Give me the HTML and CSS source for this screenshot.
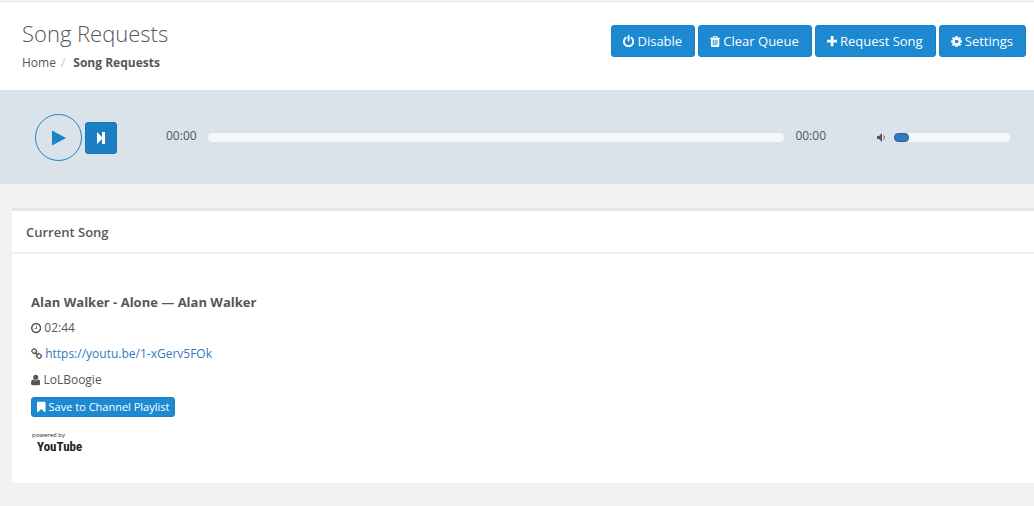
FILE: index.html
```html
<!DOCTYPE html>
<html lang="en">
<head>
    <meta charset="UTF-8">
    <meta name="viewport" content="width=device-width, initial-scale=1.0">
    <title>Song Requests</title>
    <link rel="stylesheet" href="styles.css">
</head>
<body>
    <header class="page-heading">
        <div class="heading-text">
            <h1>Song Requests</h1>
            <nav aria-label="Breadcrumb">
                <ol class="breadcrumb">
                    <li><a href="#">Home</a></li>
                    <li class="active"><strong>Song Requests</strong></li>
                </ol>
            </nav>
        </div>
        <div class="title-action">
            <button type="button" class="btn"><svg class="icon" viewBox="128 0 1536 1792" aria-hidden="true"><path d="M1664 896q0 156-61 298t-164 245-245 164-298 61-298-61-245-164-164-245-61-298q0-182 80.5-343t226.5-270q43-32 95.5-25t83.5 50q32 42 24.5 94.5t-49.5 84.5q-98 74-151.5 181t-53.5 228q0 104 40.5 198.5t109.5 163.5 163.5 109.5 198.5 40.5 198.5-40.5 163.5-109.5 109.5-163.5 40.5-198.5q0-121-53.5-228t-151.5-181q-42-32-49.5-84.5t24.5-94.5q31-43 84-50t95 25q146 109 226.5 270t80.5 343zm-640-768v640q0 52-38 90t-90 38-90-38-38-90v-640q0-52 38-90t90-38 90 38 38 90z"/></svg>Disable</button>
            <button type="button" class="btn"><svg class="icon" viewBox="192 0 1408 1792" aria-hidden="true"><path d="M704 1376v-704q0-14-9-23t-23-9h-64q-14 0-23 9t-9 23v704q0 14 9 23t23 9h64q14 0 23-9t9-23zm256 0v-704q0-14-9-23t-23-9h-64q-14 0-23 9t-9 23v704q0 14 9 23t23 9h64q14 0 23-9t9-23zm256 0v-704q0-14-9-23t-23-9h-64q-14 0-23 9t-9 23v704q0 14 9 23t23 9h64q14 0 23-9t9-23zm-544-992h448l-48-117q-7-9-17-11h-317q-10 2-17 11zm928 32v64q0 14-9 23t-23 9h-96v948q0 83-47 143.5t-113 60.5h-832q-66 0-113-58.5t-47-141.5v-952h-96q-14 0-23-9t-9-23v-64q0-14 9-23t23-9h309l70-167q15-37 54-63t79-26h320q40 0 79 26t54 63l70 167h309q14 0 23 9t9 23z"/></svg>Clear Queue</button>
            <button type="button" class="btn"><svg class="icon" viewBox="192 0 1408 1792" aria-hidden="true"><path d="M1600 736v192q0 40-28 68t-68 28h-416v416q0 40-28 68t-68 28h-192q-40 0-68-28t-28-68v-416h-416q-40 0-68-28t-28-68v-192q0-40 28-68t68-28h416v-416q0-40 28-68t68-28h192q40 0 68 28t28 68v416h416q40 0 68 28t28 68z"/></svg>Request Song</button>
            <button type="button" class="btn"><svg class="icon" viewBox="128 0 1536 1792" aria-hidden="true"><path d="M1152 896q0-106-75-181t-181-75-181 75-75 181 75 181 181 75 181-75 75-181zm512-109v222q0 12-8 23t-20 13l-185 28q-19 54-39 91 35 50 107 138 10 12 10 25t-9 23q-27 37-99 108t-94 71q-12 0-26-9l-138-108q-44 23-91 38-16 136-29 186-7 28-36 28h-222q-14 0-24.5-8.5t-11.5-21.5l-28-184q-49-16-90-37l-141 107q-10 9-25 9-14 0-25-11-126-114-165-168-7-10-7-23 0-12 8-23 15-21 51-66.5t54-70.5q-27-50-41-99l-183-27q-13-2-21-12.5t-8-23.5v-222q0-12 8-23t19-13l186-28q14-46 39-92-40-57-107-138-10-12-10-24 0-10 9-23 26-36 98.5-107.5t94.5-71.5q13 0 26 10l138 107q44-23 91-38 16-136 29-186 7-28 36-28h222q14 0 24.5 8.5t11.5 21.5l28 184q49 16 90 37l142-107q9-9 24-9 13 0 25 10 129 119 165 170 7 8 7 22 0 12-8 23-15 21-51 66.5t-54 70.5q26 50 41 98l183 28q13 2 21 12.5t8 23.5z"/></svg>Settings</button>
        </div>
    </header>

    <section class="player" aria-label="Player">
        <div class="player-controls">
            <button type="button" class="play-btn" aria-label="Play">
                <svg viewBox="0 0 14 16" aria-hidden="true"><path d="M0 0.5L14 8L0 15.5z"/></svg>
            </button>
            <button type="button" class="next-btn" aria-label="Next song">
                <svg viewBox="0 0 8 12" aria-hidden="true"><path d="M0 0L5 5V0H8V12H5V7L0 12z"/></svg>
            </button>
        </div>
        <div class="player-seek">
            <span class="time">00:00</span>
            <input type="range" class="slider seek" min="0" max="164" value="0" aria-label="Seek">
            <span class="time">00:00</span>
        </div>
        <div class="player-volume">
            <svg class="volume-icon" viewBox="0 0 9 9" aria-hidden="true"><path d="M0 3H2L5 0V9L2 6H0z"/><path class="wave" d="M6.5 2.5Q8.5 4.5 6.5 6.5"/></svg>
            <input type="range" class="slider volume" min="0" max="100" value="0" aria-label="Volume">
        </div>
    </section>

    <main class="wrapper">
        <section class="ibox">
            <div class="ibox-title">
                <h2>Current Song</h2>
            </div>
            <div class="ibox-content">
                <h3>Alan Walker - Alone — Alan Walker</h3>
                <p><svg class="icon" viewBox="128 0 1536 1792" aria-hidden="true"><path d="M1024 544v448q0 14-9 23t-23 9h-320q-14 0-23-9t-9-23v-64q0-14 9-23t23-9h224v-352q0-14 9-23t23-9h64q14 0 23 9t9 23zm416 352q0-148-73-273t-198-198-273-73-273 73-198 198-73 273 73 273 198 198 273 73 273-73 198-198 73-273zm224 0q0 209-103 385.5t-279.5 279.5-385.5 103-385.5-103-279.5-279.5-103-385.5 103-385.5 279.5-279.5 385.5-103 385.5 103 279.5 279.5 103 385.5z"/></svg>02:44</p>
                <p><svg class="icon" viewBox="64 0 1664 1792" aria-hidden="true"><path d="M1520 1216q0-40-28-68l-208-208q-28-28-68-28-42 0-72 32 3 3 19 18.5t21.5 21.5 15 19 13 25.5 3.5 27.5q0 40-28 68t-68 28q-15 0-27.5-3.5t-25.5-13-19-15-21.5-21.5-18.5-19q-33 31-33 73 0 40 28 68l206 207q27 27 68 27 40 0 68-26l147-146q28-28 28-67zm-703-705q0-40-28-68l-206-207q-28-28-68-28-39 0-68 27l-147 146q-28 28-28 67 0 40 28 68l208 208q27 27 68 27 42 0 72-31-3-3-19-18.5t-21.5-21.5-15-19-13-25.5-3.5-27.5q0-40 28-68t68-28q15 0 27.5 3.5t25.5 13 19 15 21.5 21.5 18.5 19q33-31 33-73zm895 705q0 120-85 203l-147 146q-83 83-203 83-121 0-204-85l-206-207q-83-83-83-203 0-123 88-209l-88-88q-86 88-208 88-120 0-204-84l-208-208q-84-84-84-204t85-203l147-146q83-83 203-83 121 0 204 85l206 207q83 83 83 203 0 123-88 209l88 88q86-88 208-88 120 0 204 84l208 208q84 84 84 204z"/></svg><a href="https://youtu.be/1-xGerv5FOk">https://youtu.be/1-xGerv5FOk</a></p>
                <p><svg class="icon" viewBox="192 0 1408 1792" aria-hidden="true"><path d="M1600 1405q0 120-73 189.5t-194 69.5h-874q-121 0-194-69.5t-73-189.5q0-53 3.5-103.5t14-109 26.5-108.5 43-97.5 62-81 85.5-53.5 111.5-20q9 0 42 21.5t74.5 48 108 48 133.5 21.5 133.5-21.5 108-48 74.5-48 42-21.5q61 0 111.5 20t85.5 53.5 62 81 43 97.5 26.5 108.5 14 109 3.5 103.5zm-320-893q0 159-112.5 271.5t-271.5 112.5-271.5-112.5-112.5-271.5 112.5-271.5 271.5-112.5 271.5 112.5 112.5 271.5z"/></svg>LoLBoogie</p>
                <button type="button" class="btn btn-xs"><svg class="icon" viewBox="256 0 1280 1792" aria-hidden="true"><path d="M1420 128q23 0 44 9 33 13 52.5 41t19.5 62v1289q0 34-19.5 62t-52.5 41q-19 8-44 8-48 0-83-32l-441-424-441 424q-36 33-83 33-23 0-44-9-33-13-52.5-41t-19.5-62v-1289q0-34 19.5-62t52.5-41q21-9 44-9h1048z"/></svg>Save to Channel Playlist</button>
                <div class="powered-by">
                    <small>powered by</small>
                    <b>YouTube</b>
                </div>
            </div>
        </section>
    </main>
</body>
</html>
```
FILE: styles.css
```css
* {
    box-sizing: border-box;
}

body {
    margin: 0;
    padding-top: 1px;
    font-family: "Open Sans", "Noto Sans", sans-serif;
    font-size: 12px;
    line-height: 18px;
    color: #54575a;
    background: #f2f2f2;
}

h1, h2, h3, p, ol {
    margin: 0;
    padding: 0;
}

a {
    color: #337ab7;
    text-decoration: none;
}

button {
    font: inherit;
    cursor: pointer;
}

svg {
    fill: currentColor;
}

.icon {
    height: 13px;
    flex: none;
}

/* Heading */
.page-heading {
    display: flex;
    justify-content: space-between;
    align-items: flex-start;
    padding: 17px 8px 18px 22px;
    background: #fff;
    border-top: 1px solid #e5e5e5;
}

h1 {
    font-size: 22px;
    font-weight: 300;
    line-height: 28px;
}

.breadcrumb {
    display: flex;
    list-style: none;
    margin-top: 7px;
}

.breadcrumb a {
    color: inherit;
}

.breadcrumb .active::before {
    content: "/";
    padding: 0 8px 0 5px;
    color: #ccc;
}

.breadcrumb strong {
    font-weight: 700;
}

.title-action {
    display: flex;
    gap: 3px;
    padding-top: 6px;
}

.btn {
    display: inline-flex;
    align-items: center;
    gap: 3px;
    padding: 6px 12px 6px 11px;
    font-size: 13px;
    color: #fff;
    background: #1c89d1;
    border: 1px solid #1a7fc4;
    border-radius: 3px;
    white-space: nowrap;
}

.btn-xs {
    padding: 0 5px;
    font-size: 11px;
    font-weight: 500;
}

.btn-xs .icon {
    height: 12px;
}

/* Player */
.player {
    display: flex;
    align-items: center;
    padding: 24px 24px 23px 35px;
    background: #dae2ea;
}

.player-controls {
    display: flex;
    align-items: center;
    gap: 3px;
}

.play-btn {
    display: grid;
    place-items: center;
    width: 47px;
    height: 47px;
    padding: 0;
    color: #1c84c6;
    background: none;
    border: 1px solid #1c84c6;
    border-radius: 50%;
}

.play-btn svg {
    width: 14px;
    height: 16px;
}

.next-btn {
    display: grid;
    place-items: center;
    width: 32px;
    height: 32px;
    padding: 0;
    color: #fff;
    background: #1c7fc3;
    border: 1px solid #1a74b5;
    border-radius: 3px;
}

.next-btn svg {
    width: 8px;
    height: 12px;
}

.player-seek {
    display: flex;
    flex: 1;
    align-items: center;
    gap: 11px;
    margin-left: 49px;
}

.time {
    padding-bottom: 3px;
}

.player-volume {
    display: flex;
    align-items: center;
    gap: 8px;
    margin-left: 51px;
}

.volume-icon {
    width: 9px;
    height: 9px;
}

.wave {
    fill: none;
    stroke: currentColor;
}

.slider {
    appearance: none;
    height: 9px;
    margin: 0;
    background: #f7f7f7;
    border-radius: 4px;
}

.slider::-webkit-slider-thumb {
    appearance: none;
    width: 15px;
    height: 9px;
    background: #337ab7;
    border: 1px solid #2464ae;
    border-radius: 4px;
}

.seek {
    flex: 1;
    min-width: 0;
}

.seek::-webkit-slider-thumb {
    opacity: 0;
}

.volume {
    width: 116px;
}

/* Current song */
.wrapper {
    padding: 24px 0 23px 12px;
}

.ibox {
    background: #fff;
    border-top: 3px solid #e4e7ea;
}

.ibox-title {
    padding: 12px 14px 11px;
    border-bottom: 2px solid #eef0f2;
}

.ibox-title h2 {
    font-size: 13px;
    font-weight: 600;
}

.ibox-content {
    display: flex;
    flex-direction: column;
    align-items: flex-start;
    gap: 8px;
    padding: 39px 19px 28px;
}

.ibox-content h3 {
    font-size: 13px;
    font-weight: 700;
}

.ibox-content p {
    display: flex;
    align-items: center;
    gap: 3px;
}

.ibox-content p .icon {
    height: 12px;
}

.powered-by {
    display: grid;
    padding: 6px 0 0 1px;
    color: #222;
}

.powered-by small {
    font-size: 6px;
    line-height: 8px;
}

.powered-by b {
    padding-left: 5px;
    font-family: "Liberation Sans Narrow", "Roboto Condensed", Roboto, sans-serif;
    font-size: 13px;
    line-height: 16px;
}
```
